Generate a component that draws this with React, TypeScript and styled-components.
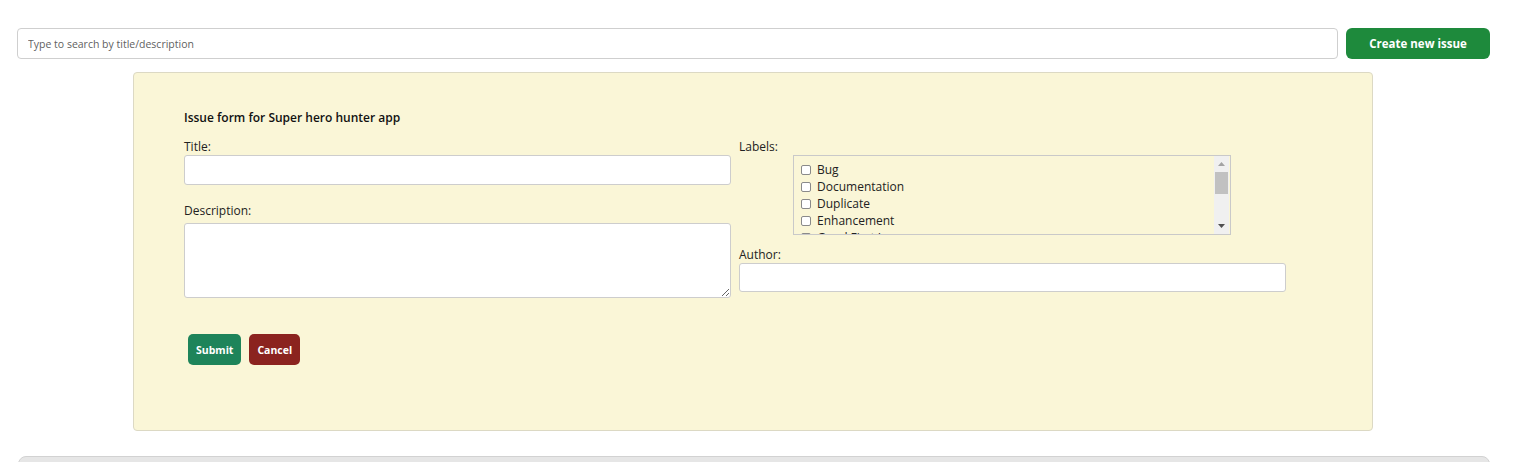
import { createGlobalStyle, styled } from 'styled-components';

const labelOptions = [
  'Bug',
  'Documentation',
  'Duplicate',
  'Enhancement',
  'Good First Issue',
  'Help Wanted',
  'Invalid',
  'Question',
  'Wontfix',
];

export default function App() {
  return (
    <>
      <GlobalStyle />
      <St.Page>
        <St.Toolbar>
          <St.Search placeholder='Type to search by title/description' />
          <St.CreateButton>Create new issue</St.CreateButton>
        </St.Toolbar>

        <St.Panel>
          <St.FormTitle>Issue form for Super hero hunter app</St.FormTitle>
          <St.Grid>
            <St.Column>
              <St.Field>
                <St.Label>Title:</St.Label>
                <St.Input />
              </St.Field>
              <St.Field $top={18} $gap={4}>
                <St.Label>Description:</St.Label>
                <St.TextArea />
              </St.Field>
            </St.Column>

            <St.Column>
              <St.Field>
                <St.Label>Labels:</St.Label>
                <St.ListBox>
                  <St.Options>
                    {labelOptions.map((name) => (
                      <St.Option key={name}>
                        <St.Check type='checkbox' />
                        {name}
                      </St.Option>
                    ))}
                  </St.Options>
                  <St.ScrollBar>
                    <St.ScrollButton>
                      <svg width='7' height='4' viewBox='0 0 7 4'>
                        <path d='M3.5 0 L7 4 L0 4 Z' fill='#a3a3a3' />
                      </svg>
                    </St.ScrollButton>
                    <St.Track>
                      <St.Thumb />
                    </St.Track>
                    <St.ScrollButton>
                      <svg width='7' height='4' viewBox='0 0 7 4'>
                        <path d='M0 0 L7 0 L3.5 4 Z' fill='#505050' />
                      </svg>
                    </St.ScrollButton>
                  </St.ScrollBar>
                </St.ListBox>
              </St.Field>
              <St.Field $top={12}>
                <St.Label>Author:</St.Label>
                <St.Input $height={29} />
              </St.Field>
            </St.Column>
          </St.Grid>

          <St.Actions>
            <St.ActionButton $bg='#1e845a'>Submit</St.ActionButton>
            <St.ActionButton $bg='#8b231f'>Cancel</St.ActionButton>
          </St.Actions>
        </St.Panel>

        <St.Footer />
      </St.Page>
    </>
  );
}

const GlobalStyle = createGlobalStyle`
  * { box-sizing: border-box; }
  html, body { margin: 0; background: #fff; }
  body {
    font-family: 'Open Sans', 'Noto Sans', sans-serif;
    color: #222;
    overflow: hidden;
  }
`;

const St = {
  Page: styled.div`
    width: 1540px;
    height: 462px;
    padding: 28px 50px 0 17px;
    display: flex;
    flex-direction: column;
    overflow: hidden;
  `,

  Toolbar: styled.div`
    display: flex;
    gap: 8px;
    height: 31px;
    flex-shrink: 0;
  `,

  Search: styled.input`
    flex: 1;
    height: 31px;
    padding: 0 10px;
    border: 1px solid #cfcfcf;
    border-radius: 4px;
    font-family: inherit;
    font-size: 10.5px;
    outline: none;
    &::placeholder { color: #5f5f5f; }
  `,

  CreateButton: styled.button`
    width: 144px;
    height: 31px;
    border: none;
    border-radius: 6px;
    background: #1e8a3c;
    color: #fff;
    font-family: inherit;
    font-size: 11.5px;
    font-weight: 700;
  `,

  Panel: styled.section`
    flex-shrink: 0;
    width: 1240px;
    height: 359px;
    margin: 13px 0 0 116px;
    padding: 37px 0 0 50px;
    background: #faf6d7;
    border: 1px solid #dcd9c4;
    border-radius: 4px;
  `,

  FormTitle: styled.h3`
    margin: 0 0 13px;
    font-size: 12px;
    font-weight: 600;
    line-height: 16px;
    color: #111;
  `,

  Grid: styled.div`
    display: grid;
    grid-template-columns: 547px 547px;
    column-gap: 8px;
  `,

  Column: styled.div`
    display: flex;
    flex-direction: column;
  `,

  Field: styled.div<{ $top?: number; $gap?: number }>`
    display: flex;
    flex-direction: column;
    gap: ${({ $gap }) => $gap ?? 0}px;
    margin-top: ${({ $top }) => $top ?? 0}px;
  `,

  Label: styled.label`
    font-size: 12px;
    line-height: 16px;
    color: #222;
  `,

  Input: styled.input<{ $height?: number }>`
    height: ${({ $height }) => $height ?? 30}px;
    border: 1px solid #cdcdcd;
    border-radius: 3px;
    background: #fff;
    outline: none;
  `,

  TextArea: styled.textarea`
    height: 75px;
    border: 1px solid #cdcdcd;
    border-radius: 3px;
    background: #fff;
    resize: vertical;
    outline: none;
  `,

  ListBox: styled.div`
    display: flex;
    width: 438px;
    height: 80px;
    margin-left: 54px;
    border: 1px solid #c9c9c9;
  `,

  Options: styled.div`
    flex: 1;
    padding: 5px 7px;
    overflow: hidden;
  `,

  Option: styled.label`
    display: flex;
    align-items: center;
    height: 17px;
    font-size: 12px;
    color: #222;
  `,

  Check: styled.input`
    appearance: none;
    flex-shrink: 0;
    width: 10px;
    height: 10px;
    margin: 0 6px 0 0;
    border: 1px solid #8a8a8a;
    border-radius: 2px;
    background: #fff;
  `,

  ScrollBar: styled.div`
    display: flex;
    flex-direction: column;
    width: 15px;
    margin-right: 1px;
    background: #f0f0f0;
  `,

  ScrollButton: styled.div`
    display: flex;
    align-items: center;
    justify-content: center;
    height: 16px;
    flex-shrink: 0;
  `,

  Track: styled.div`
    flex: 1;
    padding: 0 1px;
  `,

  Thumb: styled.div`
    height: 22px;
    background: #c1c1c1;
  `,

  Actions: styled.div`
    display: flex;
    gap: 8px;
    margin: 36px 0 0 4px;
  `,

  ActionButton: styled.button<{ $bg: string }>`
    height: 31px;
    padding: 0 8px;
    border: none;
    border-radius: 5px;
    background: ${({ $bg }) => $bg};
    color: #fff;
    font-family: inherit;
    font-size: 10.5px;
    font-weight: 700;
  `,

  Footer: styled.div`
    flex-shrink: 0;
    height: 20px;
    margin: 25px 0 0 1px;
    background: #e6e6e6;
    border: 1px solid #d2d2d2;
    border-radius: 8px 8px 0 0;
  `,
};
